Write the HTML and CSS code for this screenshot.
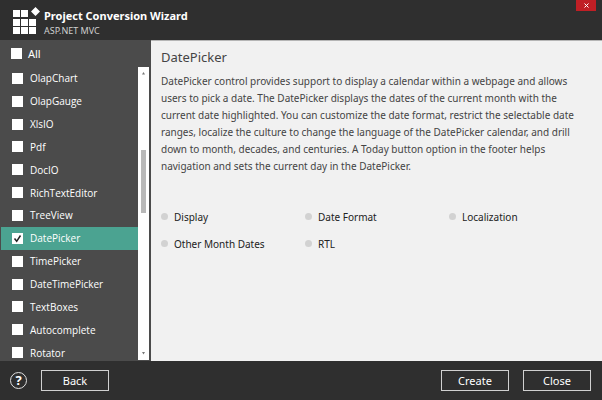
FILE: index.html
```html
<!DOCTYPE html>
<html lang="en">
<head>
<meta charset="utf-8">
<title>Project Conversion Wizard</title>
<link rel="stylesheet" href="styles.css">
</head>
<body>
<div class="wizard">
  <header class="header">
    <svg class="logo" viewBox="0 0 28 28" aria-hidden="true">
      <path d="M0 3h7v7H0zM8 3h7v7H8zM0 12h7v7H0zM8 12h7v7H8zM16 12h7v7h-7zM0 20h7v7H0zM8 20h7v7H8zM16 20h7v7h-7zM22.500 0L27 4.500 22.500 9 18 4.500z"/>
    </svg>
    <div class="titles">
      <h1 class="title">Project Conversion Wizard</h1>
      <p class="subtitle">ASP.NET MVC</p>
    </div>
    <button class="window-close" type="button" aria-label="Close window"><svg viewBox="0 0 5 5" aria-hidden="true"><path d="M.5.5l4 4m0-4l-4 4"/></svg></button>
  </header>
  <main class="body">
    <aside class="sidebar">
      <label class="all"><input class="check" type="checkbox">All</label>
      <div class="components">
        <ul class="list">
          <li><label class="item"><input class="check" type="checkbox">OlapChart</label></li>
          <li><label class="item"><input class="check" type="checkbox">OlapGauge</label></li>
          <li><label class="item"><input class="check" type="checkbox">XlsIO</label></li>
          <li><label class="item"><input class="check" type="checkbox">Pdf</label></li>
          <li><label class="item"><input class="check" type="checkbox">DocIO</label></li>
          <li><label class="item"><input class="check" type="checkbox">RichTextEditor</label></li>
          <li><label class="item"><input class="check" type="checkbox">TreeView</label></li>
          <li><label class="item selected"><span class="tick-box"><input class="check" type="checkbox" checked><svg class="tick" viewBox="0 0 11 11" aria-hidden="true"><path d="M2.500 5.500l2.200 2.800L8.500 2.500"/></svg></span>DatePicker</label></li>
          <li><label class="item"><input class="check" type="checkbox">TimePicker</label></li>
          <li><label class="item"><input class="check" type="checkbox">DateTimePicker</label></li>
          <li><label class="item"><input class="check" type="checkbox">TextBoxes</label></li>
          <li><label class="item"><input class="check" type="checkbox">Autocomplete</label></li>
          <li><label class="item"><input class="check" type="checkbox">Rotator</label></li>
        </ul>
        <div class="scrollbar" aria-hidden="true">
          <svg class="arrow" viewBox="0 0 5 3"><path d="M1 2.500L2.500 0 4 2.500z"/></svg>
          <div class="track"><div class="thumb"></div></div>
          <svg class="arrow" viewBox="0 0 5 3"><path d="M1 0h3L2.500 2.500z"/></svg>
        </div>
      </div>
    </aside>
    <section class="details">
      <h2 class="name">DatePicker</h2>
      <p class="description">DatePicker control provides support to display a calendar within a webpage and allows users to pick a date. The DatePicker displays the dates of the current month with the current date highlighted. You can customize the date format, restrict the selectable date ranges, localize the culture to change the language of the DatePicker calendar, and drill down to month, decades, and centuries. A Today button option in the footer helps navigation and sets the current day in the DatePicker.</p>
      <ul class="features">
        <li>Display</li>
        <li>Date Format</li>
        <li>Localization</li>
        <li>Other Month Dates</li>
        <li>RTL</li>
      </ul>
    </section>
  </main>
  <footer class="footer">
    <button class="help" type="button" aria-label="Help">?</button>
    <button class="button" type="button">Back</button>
    <button class="button create" type="button">Create</button>
    <button class="button close" type="button">Close</button>
  </footer>
</div>
</body>
</html>
```
FILE: styles.css
```css
* { box-sizing: border-box; }

body {
  margin: 0;
  font-family: "Noto Sans", "Open Sans", sans-serif;
  font-size: 10px;
  color: #fff;
}

h1, h2, p, ul { margin: 0; padding: 0; }
ul { list-style: none; }
button { font: inherit; color: inherit; padding: 0; background: none; }

.wizard {
  display: flex;
  flex-direction: column;
  height: 100vh;
  background: #2f2f2f;
}

.header {
  display: flex;
  align-items: flex-start;
  gap: 3px;
  padding: 0 6px 0 13px;
  height: 40px;
}
.logo { width: 28px; height: 28px; margin-top: 7px; fill: #fff; }
.titles { padding-top: 8px; }
.title { font-size: 11px; line-height: 16px; font-weight: 700; }
.subtitle { font-size: 9px; line-height: 13px; color: #d0d0d0; }

.window-close {
  display: grid;
  place-items: center;
  width: 20px;
  height: 11px;
  margin-left: auto;
  border: 0;
  background: #c01f25;
}
.window-close svg { width: 5px; height: 5px; stroke: #fff; fill: none; }

.body { display: flex; flex: 1; min-height: 0; }

.sidebar {
  display: flex;
  flex-direction: column;
  flex: 0 0 151px;
  padding: 0 2px 1px 1px;
  background: #4b4b4b;
}
.all {
  display: flex;
  align-items: center;
  gap: 6px;
  height: 27px;
  padding-left: 10px;
  font-size: 11px;
}
.components { display: flex; flex: 1; min-height: 0; overflow: hidden; }
.list {
  display: grid;
  grid-auto-rows: 1fr;
  flex: 1;
  margin-bottom: -4px;
}
.item {
  display: flex;
  align-items: center;
  gap: 7px;
  height: 100%;
  padding-left: 11px;
  font-family: "Open Sans", "Noto Sans", sans-serif;
  line-height: 14px;
}
.selected { background: #4ba391; }
.check {
  display: block;
  appearance: none;
  width: 11px;
  height: 11px;
  margin: 0;
  background: #fff;
}
.tick-box { position: relative; }
.tick {
  position: absolute;
  inset: 0;
  fill: none;
  stroke: #222;
  stroke-width: 1.5;
}

.scrollbar {
  display: flex;
  flex-direction: column;
  align-items: center;
  width: 11px;
  padding: 5px 0;
  background: #fff;
}
.arrow { width: 5px; height: 3px; fill: #777; }
.track {
  display: grid;
  grid-template-rows: 75fr 63fr 139fr;
  flex: 1;
  width: 5px;
}
.thumb { grid-row: 2; background: #b8b8b8; }

.details {
  flex: 1;
  padding: 8px 9px 0 10px;
  background: #f1f1f1;
  border-top: 1px solid #b5b5b5;
  color: #444;
}
.name { font-size: 13px; line-height: 17px; font-weight: 400; }
.description { margin-top: 7px; padding-right: 12px; line-height: 17px; }
.features {
  display: grid;
  grid-template-columns: repeat(3, 1fr);
  grid-auto-rows: 27px;
  align-items: center;
  margin-top: 28px;
  color: #222;
}
.features li { display: flex; align-items: center; gap: 6px; }
.features li::before {
  content: "";
  width: 7px;
  height: 7px;
  border-radius: 50%;
  background: #d2d2d2;
}

.footer {
  display: flex;
  align-items: center;
  gap: 14px;
  height: 39px;
  padding: 0 11px 0 10px;
}
.help {
  width: 17px;
  height: 17px;
  border: 1px solid #e0e0e0;
  border-radius: 50%;
  font-size: 13px;
  line-height: 15px;
  font-weight: 700;
}
.button {
  width: 68px;
  height: 21px;
  border: 1px solid #d0d0d0;
  font-size: 11px;
  line-height: 17px;
}
.create { margin-left: auto; }
```
